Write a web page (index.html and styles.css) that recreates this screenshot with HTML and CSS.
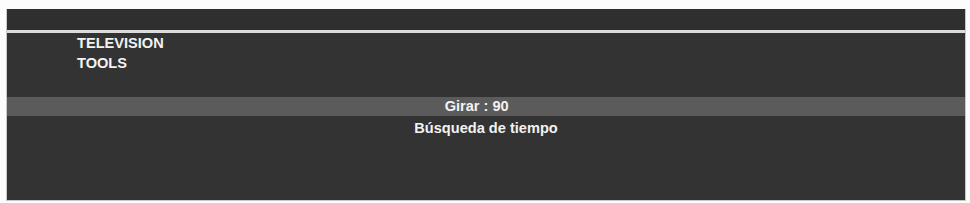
FILE: index.html
```html
<!DOCTYPE html>
<html lang="en">
  <head>
    <meta charset="UTF-8" />
    <meta name="viewport" content="width=device-width, initial-scale=1.0" />
    <title>TV Tools</title>
    <link rel="stylesheet" href="styles.css">
  </head>
  <body>
    <div class="panel">
      <!-- Title bar -->
      <div class="topbar"></div>

      <!-- Menu path -->
      <ul class="menu">
        <li>TELEVISION</li>
        <li>TOOLS</li>
      </ul>

      <!-- Options -->
      <div class="option selected">
        <span class="label">Girar</span>
        <span class="sep">:</span>
        <span class="value">90</span>
      </div>
      <div class="option single">Búsqueda de tiempo</div>
    </div>
  </body>
</html>
```

FILE: styles.css
```css
body {
  margin: 0;
  padding: 0;
  background-color: #fcfcfc;
  font-family: "Liberation Sans", Arial, sans-serif;
}
.panel {
  width: 958px;
  height: 191px;
  margin: 9px 0 0 6px;
  background: #333333;
  border: 1px solid #c8c8c8;
  border-top: none;
  box-sizing: content-box;
}
.topbar {
  height: 21px;
  background: #2f2f2f;
  border-bottom: 3px solid #dcdcdc;
}
.menu {
  list-style: none;
  margin: 0;
  padding: 0 0 0 70px;
  color: #f2f2f2;
  font-size: 14.6px;
  font-weight: bold;
  line-height: 20px;
}
.option {
  color: #f2f2f2;
  font-size: 14.6px;
  font-weight: bold;
  line-height: 19px;
}
.option.selected {
  margin-top: 24px;
  background: #5b5b5b;
  display: grid;
  grid-template-columns: 1fr auto 1fr;
  column-gap: 4px;
}
.option .label {
  text-align: right;
}
.option .value {
  text-align: left;
}
.option.single {
  padding-top: 3px;
  text-align: center;
}
```
